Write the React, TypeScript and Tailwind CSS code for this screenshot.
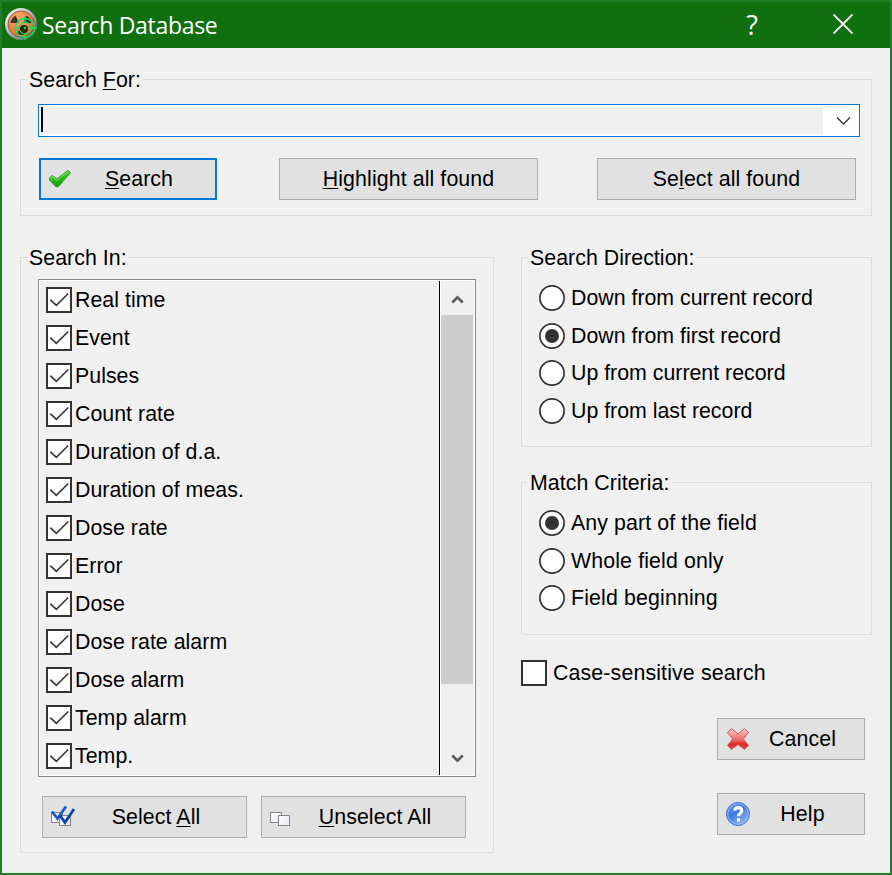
import type { ReactNode } from "react";

const FIELDS = [
  "Real time",
  "Event",
  "Pulses",
  "Count rate",
  "Duration of d.a.",
  "Duration of meas.",
  "Dose rate",
  "Error",
  "Dose",
  "Dose rate alarm",
  "Dose alarm",
  "Temp alarm",
  "Temp.",
];

function AppIcon() {
  return (
    <svg className="mb-[2px] h-8 w-8" viewBox="0 0 32 32">
      <defs>
        <linearGradient id="rim" x1="0" y1="0" x2="1" y2="1">
          <stop offset="0" stopColor="#ffffff" />
          <stop offset="0.5" stopColor="#b0b0b0" />
          <stop offset="1" stopColor="#4a4a4a" />
        </linearGradient>
        <radialGradient id="core" cx="0.4" cy="0.3" r="0.8">
          <stop offset="0" stopColor="#ffa873" />
          <stop offset="1" stopColor="#e86420" />
        </radialGradient>
      </defs>
      <circle cx="16" cy="16" r="16" fill="url(#rim)" />
      <circle cx="16" cy="16" r="13" fill="url(#core)" stroke="#7c5244" strokeWidth="0.800" />
      <path d="M14 15H5.500A11 11 0 0 1 10.500 7.500Z" fill="#3a352e" />
      <path d="M18 15H26.500A11 11 0 0 0 21.500 7.500Z" fill="#3a352e" />
      <path d="M16 18.500 11.500 26A11 11 0 0 0 20.500 26Z" fill="#3a352e" />
      <circle cx="19" cy="21" r="4" fill="#26240c" />
      <g fill="none" stroke="#0ce456">
        <circle cx="20" cy="20" r="9.500" strokeWidth="1.300" />
        <circle cx="20" cy="20" r="5.700" strokeWidth="1.100" />
        <path d="M20 8v7M20 25v7M8 20h7M25 20h7" strokeWidth="1.300" />
      </g>
      <circle cx="20" cy="20" r="1.300" fill="#0ce456" />
    </svg>
  );
}

function GreenCheck() {
  return (
    <svg className="h-6 w-6" viewBox="0 0 24 24">
      <defs>
        <linearGradient id="gc" x1="0" y1="0" x2="0.3" y2="1">
          <stop offset="0" stopColor="#6fdc50" />
          <stop offset="0.6" stopColor="#2dbb1c" />
          <stop offset="1" stopColor="#1a930d" />
        </linearGradient>
      </defs>
      <path
        d="M1.500 11 4 8.300 9 11.800 20 3.300 22.500 5.800 10.300 19.800 8 19.800 1.500 13.200Z"
        fill="url(#gc)"
        stroke="#2f9e20"
        strokeWidth="0.900"
        strokeLinejoin="round"
      />
      <path d="M2.800 11.200 4.300 9.700 9 13.200 20 4.600" fill="none" stroke="#8be673" strokeWidth="0.900" />
    </svg>
  );
}

function RedCross() {
  return (
    <svg className="h-6 w-6" viewBox="0 0 24 24">
      <defs>
        <linearGradient id="rc" x1="0" y1="0" x2="0" y2="1">
          <stop offset="0" stopColor="#fbc8c8" />
          <stop offset="0.55" stopColor="#ee6a6a" />
          <stop offset="0.75" stopColor="#e02424" />
          <stop offset="1" stopColor="#e85050" />
        </linearGradient>
      </defs>
      <path
        d="M5.500 1.500 12 7 18.500 1.500 22.500 5.500 17.500 12 22.500 18.500 18.500 22.500 12 17.500 5.500 22.500 1.500 18.500 6.700 12 1.500 5.500Z"
        fill="url(#rc)"
        stroke="#cf5a5a"
        strokeWidth="1"
        strokeLinejoin="round"
      />
    </svg>
  );
}

function HelpBall() {
  return (
    <svg className="h-6 w-6" viewBox="0 0 24 24">
      <defs>
        <linearGradient id="hb" x1="0" y1="0" x2="0.6" y2="1">
          <stop offset="0" stopColor="#6f9cf0" />
          <stop offset="0.5" stopColor="#3f78e0" />
          <stop offset="1" stopColor="#8ab8f8" />
        </linearGradient>
      </defs>
      <circle cx="12" cy="12" r="11.500" fill="url(#hb)" stroke="#3f72d4" strokeWidth="1" />
      <circle cx="12" cy="12" r="10.300" fill="none" stroke="#a4c4f8" strokeWidth="0.800" />
      <path
        d="M8.700 8.700c.2-2.200 1.600-3.100 3.500-3.100 2.200 0 3.600 1.100 3.600 2.900 0 2.600-3.300 2.700-3.300 5.800"
        fill="none"
        stroke="#fff"
        strokeWidth="3.200"
      />
      <path d="M10.900 16.300h3.300v3.200h-3.300z" fill="#fff" />
    </svg>
  );
}

function TwoBoxes({ checked = false }: { checked?: boolean }) {
  return (
    <svg className="h-6 w-6" viewBox="0 0 24 24">
      <defs>
        <linearGradient id="bx" x1="0" y1="0" x2="1" y2="1">
          <stop offset="0" stopColor="#ffffff" />
          <stop offset="1" stopColor="#e4e4fa" />
        </linearGradient>
      </defs>
      <rect x="0.500" y="7.500" width="11" height="10" fill="url(#bx)" stroke="#858585" />
      <rect x="8.500" y="10.500" width="11" height="10" fill="url(#bx)" stroke="#858585" />
      {checked && (
        <g fill="none" strokeWidth="2.800">
          <path d="M1 6.500 6.500 13.500 15 1.500" stroke="#1c5cc4" />
          <path d="M9 10.500 14 17.500 23 4" stroke="#0e46a8" />
        </g>
      )}
    </svg>
  );
}

function CheckBox({ checked = false }: { checked?: boolean }) {
  return (
    <span className="flex h-[26px] w-[26px] shrink-0 items-center justify-center border-2 border-[#333333] bg-white">
      {checked && (
        <svg className="h-[22px] w-[22px]" viewBox="0 0 22 22">
          <path d="M2.300 10.600 8.300 16.400 20.300 4.500" fill="none" stroke="#3a3a3a" strokeWidth="1.700" />
        </svg>
      )}
    </span>
  );
}

function Radio({ label, checked = false, className = "" }: { label: string; checked?: boolean; className?: string }) {
  return (
    <label className={`flex h-[26px] items-center ${className}`}>
      <svg className="mr-[6px] h-[26px] w-[26px] shrink-0" viewBox="0 0 26 26">
        <circle cx="13" cy="13" r="12.100" fill="#fff" stroke="#333" strokeWidth="1.700" />
        {checked && <circle cx="13" cy="13" r="7" fill="#333" />}
      </svg>
      <span>{label}</span>
    </label>
  );
}

function Key({ children }: { children: ReactNode }) {
  return (
    <span className="underline decoration-1 underline-offset-[2px] [text-decoration-skip-ink:none]">{children}</span>
  );
}

function Button({
  icon,
  primary = false,
  className = "",
  children,
}: {
  icon?: ReactNode;
  primary?: boolean;
  className?: string;
  children: ReactNode;
}) {
  return (
    <button
      className={`flex h-[42px] items-center bg-[#e1e1e1] tracking-[0.1px] ${
        primary ? "border-2 border-[#0078d7] pl-[7px]" : icon ? "border border-[#adadad] pl-[8px]" : "border border-[#adadad]"
      } ${className}`}
    >
      {icon && <span className="-mr-[9px] shrink-0">{icon}</span>}
      <span className="flex-1 text-center">{children}</span>
    </button>
  );
}

function Group({ title, className = "", children }: { title: ReactNode; className?: string; children: ReactNode }) {
  return (
    <fieldset className={`min-w-0 border border-[#dcdcdc] pl-[17px] ${className}`}>
      <legend className="-ml-[11px] h-[25px] px-[2px] leading-[27px] tracking-[0.05px]">{title}</legend>
      {children}
    </fieldset>
  );
}

export default function App() {
  return (
    <div className="flex h-[875px] w-[892px] flex-col overflow-hidden border-2 border-[#237f27] bg-[#f0f0f0] font-['Liberation_Sans',Arial,sans-serif] text-[21.33px] leading-[25px] text-black">
      <header className="flex h-[46px] shrink-0 items-center bg-[#10700f] pl-[3px] text-white">
        <AppIcon />
        <h1 className="ml-[5px] flex-1 font-['Open_Sans','Noto_Sans',sans-serif] text-[23px] font-normal tracking-[-0.3px]">
          Search Database
        </h1>
        <span className="mr-[75px] mb-[2px] font-['Open_Sans','Noto_Sans',sans-serif] text-[27px]">?</span>
        <svg className="mr-[37px] mb-[2px] h-5 w-5" viewBox="0 0 20 20">
          <path d="M.5.500 19.500 19.500M19.500.500.500 19.500" stroke="#fff" strokeWidth="1.900" />
        </svg>
      </header>

      <main className="flex flex-1 flex-col px-[18px] pt-[19px]">
        <Group
          className="h-[149px]"
          title={
            <>
              Search <Key>F</Key>or:
            </>
          }
        >
          <div className="mt-[12px] flex h-[33px] w-[822px] border border-[#0078d7] bg-white py-[2px] pl-[2px]">
            <div className="w-[782px] bg-[#f0f0f0]">
              <div className="h-[25px] w-[2px] bg-black" />
            </div>
            <svg className="ml-[13px] h-[27px] w-[15px]" viewBox="0 0 15 27">
              <path d="M1 10.500 7.500 17 14 10.500" fill="none" stroke="#333" strokeWidth="1.400" />
            </svg>
          </div>
          <div className="mt-[21px] ml-px flex">
            <Button primary className="w-[178px]" icon={<GreenCheck />}>
              <Key>S</Key>earch
            </Button>
            <Button className="ml-[62px] w-[259px]">
              <Key>H</Key>ighlight all found
            </Button>
            <Button className="ml-[59px] w-[259px]">
              Se<Key>l</Key>ect all found
            </Button>
          </div>
        </Group>

        <div className="mt-[29px] flex justify-between">
          <Group title="Search In:" className="h-[608px] w-[474px]">
            <div className="mt-[9px] flex h-[498px] w-[438px] border border-[#828790] bg-white p-px">
              <ul className="w-[400px] bg-[#f0f0f0] pl-[6px]">
                {FIELDS.map((f) => (
                  <li key={f} className="flex h-[38px] items-center">
                    <CheckBox checked />
                    <span className="ml-[3px] tracking-[0.03px]">{f}</span>
                  </li>
                ))}
              </ul>
              <div className="w-px bg-black" />
              <div className="ml-px flex w-[33px] flex-col bg-[#f0f0f0]">
                <svg className="h-[34px] w-8" viewBox="0 0 32 34">
                  <path d="M11.300 21.500 16.500 16.300 21.700 21.500" fill="none" stroke="#5c5c5c" strokeWidth="2.700" />
                </svg>
                <div className="h-[369px] w-8 bg-[#cdcdcd]" />
                <div className="flex-1" />
                <svg className="h-[34px] w-8" viewBox="0 0 32 34">
                  <path d="M11.300 14.500 16.500 19.700 21.700 14.500" fill="none" stroke="#5c5c5c" strokeWidth="2.700" />
                </svg>
              </div>
            </div>
            <div className="mt-[19px] ml-[4px] flex gap-[14px]">
              <Button className="w-[205px]" icon={<TwoBoxes checked />}>
                Select <Key>A</Key>ll
              </Button>
              <Button className="w-[205px]" icon={<TwoBoxes />}>
                <Key>U</Key>nselect All
              </Button>
            </div>
          </Group>

          <div className="flex w-[351px] flex-col">
            <Group title="Search Direction:" className="h-[202px]">
              <Radio className="mt-[15px]" label="Down from current record" />
              <Radio className="mt-[12px]" checked label="Down from first record" />
              <Radio className="mt-[11px]" label="Up from current record" />
              <Radio className="mt-[12px]" label="Up from last record" />
            </Group>
            <Group title="Match Criteria:" className="mt-[23px] h-[165px]">
              <Radio className="mt-[15px] tracking-[0.1px]" checked label="Any part of the field" />
              <Radio className="mt-[12px] tracking-[0.13px]" label="Whole field only" />
              <Radio className="mt-[11px] tracking-[0.14px]" label="Field beginning" />
            </Group>
            <label className="mt-[25px] flex h-[26px] items-center tracking-[0.14px]">
              <CheckBox />
              <span className="ml-[6px]">Case-sensitive search</span>
            </label>
            <Button className="mt-[32px] mr-[7px] w-[148px] self-end" icon={<RedCross />}>
              Cancel
            </Button>
            <Button className="mt-[33px] mr-[7px] w-[148px] self-end" icon={<HelpBall />}>
              Help
            </Button>
          </div>
        </div>
      </main>
    </div>
  );
}
